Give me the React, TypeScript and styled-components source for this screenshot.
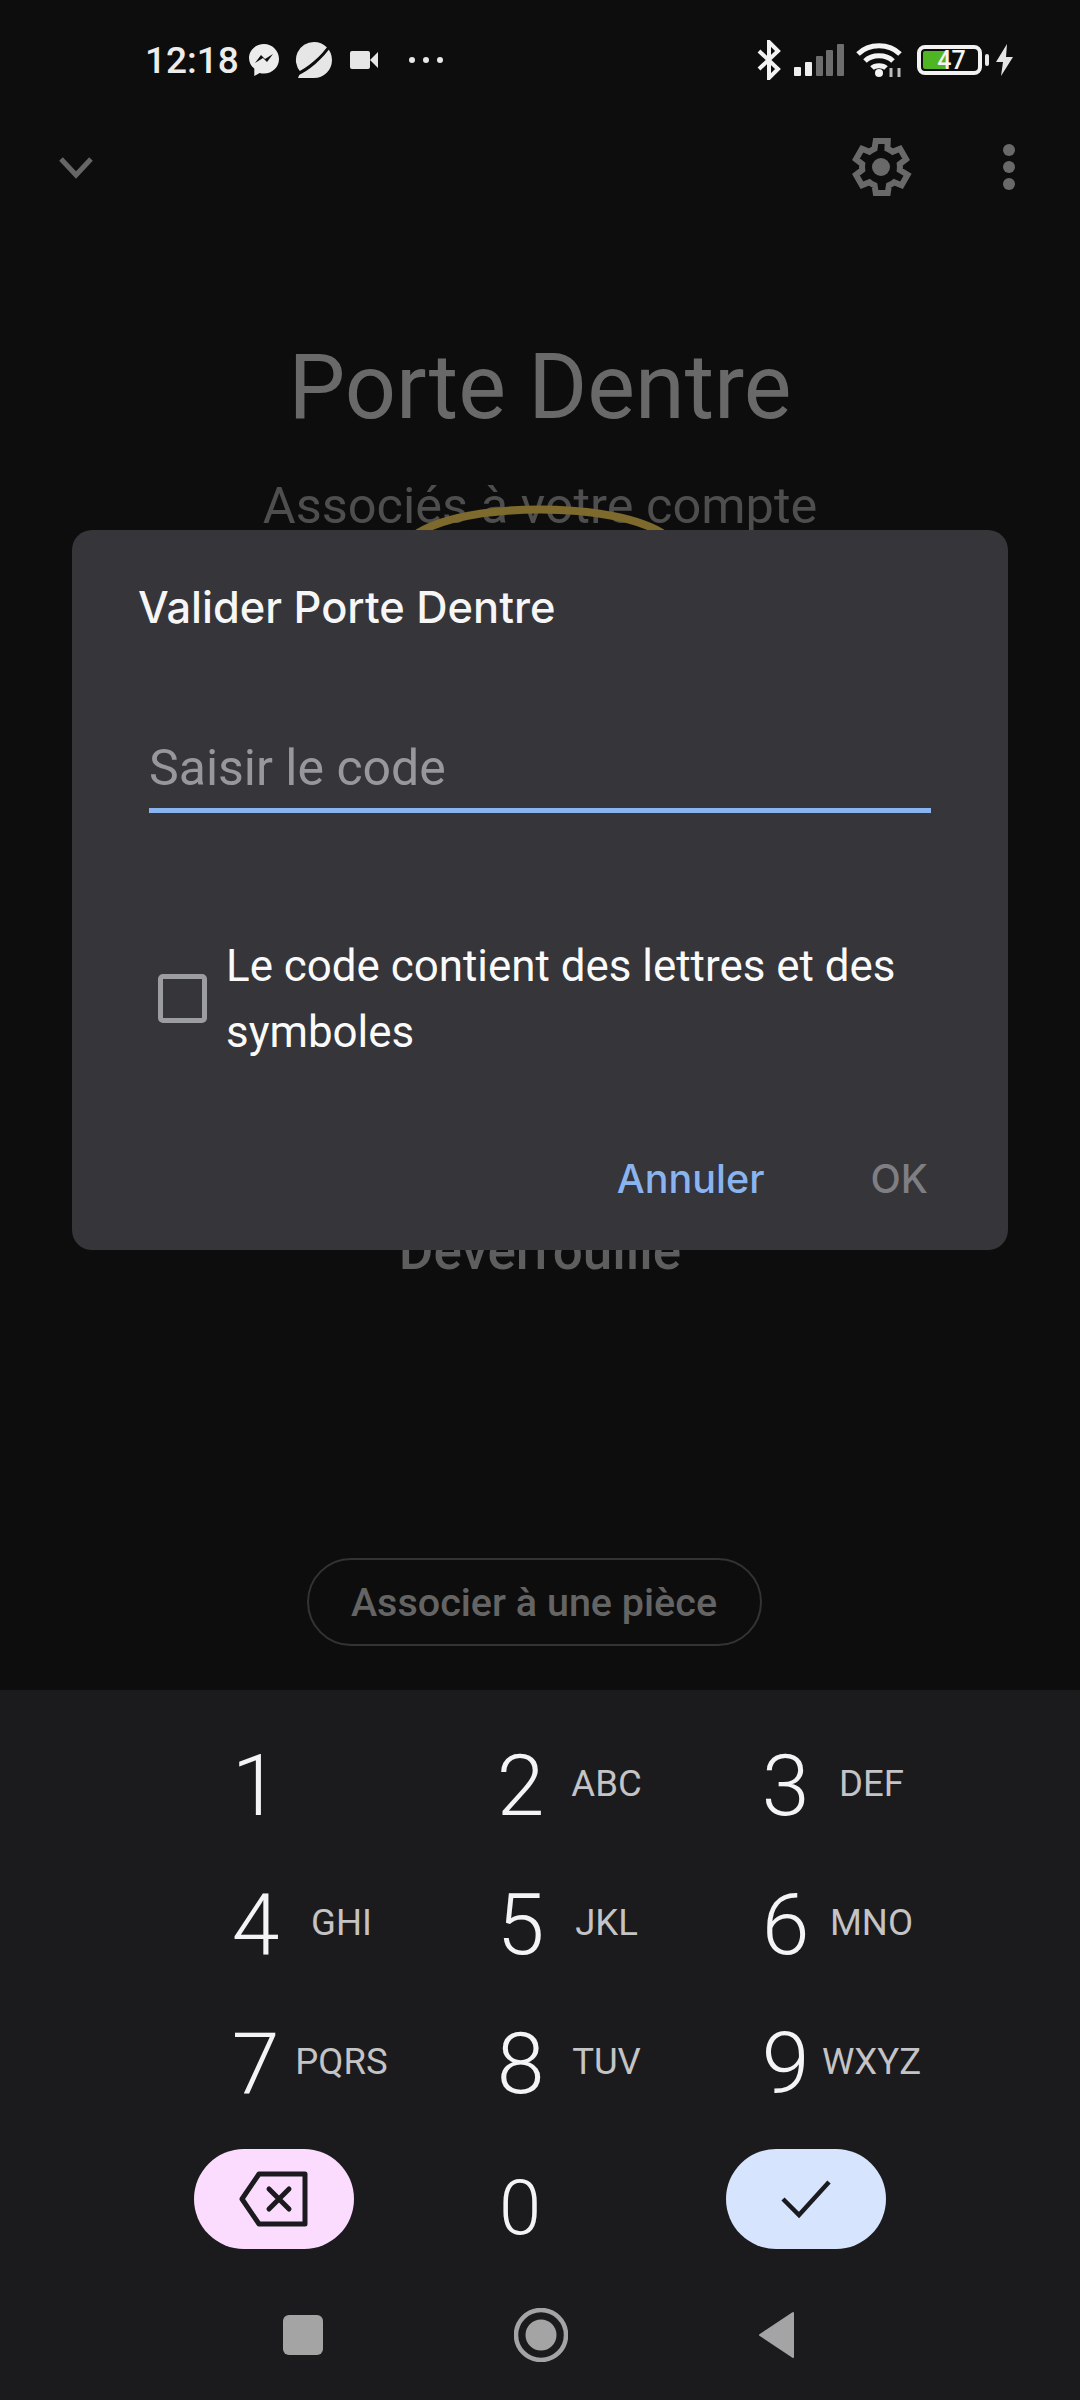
import React from 'react';
import styled, { createGlobalStyle } from 'styled-components';

const GlobalStyle = createGlobalStyle`
  html, body {
    margin: 0;
    padding: 0;
    background: #0d0d0d;
    font-family: Roboto, "Noto Sans", sans-serif;
  }
  * { box-sizing: border-box; }
`;

const Screen = styled.div`
  position: relative;
  width: 1080px;
  height: 2400px;
  overflow: hidden;
  display: flex;
  flex-direction: column;
  background: #0d0d0d;
`;

const StatusBar = styled.div`
  height: 120px;
  flex: none;
  display: flex;
  align-items: center;
  justify-content: space-between;
  padding: 0 66px 0 145px;
`;

const StatusGroup = styled.div`
  display: flex;
  align-items: center;
`;

const Clock = styled.span`
  font-size: 37px;
  font-weight: 500;
  color: #ececec;
  margin-right: 9px;
`;

const Icon = styled.svg<{ $left?: number }>`
  display: block;
  flex: none;
  margin-left: ${(p) => p.$left ?? 0}px;
`;

const Battery = styled.div`
  position: relative;
  width: 65px;
  height: 30px;
  margin-left: 14px;
  border: 4px solid #f2f2f2;
  border-radius: 8px;
  display: flex;
  align-items: center;
  justify-content: center;
  padding-left: 4px;
  font-size: 25px;
  font-weight: 500;
  line-height: 1;
  color: #f4f4f4;
  &::before {
    content: '';
    position: absolute;
    left: 2px;
    top: 2px;
    bottom: 2px;
    width: 24px;
    border-radius: 2px;
    background: #4fb522;
    z-index: 0;
  }
  &::after {
    content: '';
    position: absolute;
    right: -11px;
    top: 5px;
    width: 4px;
    height: 12px;
    border-radius: 2px;
    background: #e8e8e8;
  }
`;

const BatteryLevel = styled.span`
  position: relative;
  z-index: 1;
`;

const TopBar = styled.div`
  height: 94px;
  flex: none;
  display: flex;
  align-items: center;
  padding: 0 65px 0 58px;
`;

const TopSpacer = styled.div`
  flex: 1;
`;

const Main = styled.div`
  position: relative;
  flex: 1;
  display: flex;
  flex-direction: column;
  align-items: center;
`;

const DeviceName = styled.h1`
  margin: 124px 0 0;
  font-size: 90px;
  line-height: 100px;
  font-weight: 400;
  color: #696969;
`;

const DeviceSub = styled.div`
  margin-top: 38px;
  font-size: 50.5px;
  line-height: 60px;
  color: #4e4e4e;
`;

const LockArc = styled.svg`
  position: absolute;
  left: 405px;
  top: 291px;
`;

const LockState = styled.div`
  margin-top: 685px;
  font-size: 53px;
  line-height: 60px;
  font-weight: 500;
  color: #5e5e5e;
`;

const RoomButton = styled.div`
  margin-top: 277px;
  margin-left: -12px;
  width: 455px;
  height: 88px;
  border: 2px solid #333335;
  border-radius: 44px;
  display: flex;
  align-items: center;
  justify-content: center;
  font-size: 39.5px;
  font-weight: 500;
  color: #646464;
`;

const Dialog = styled.div`
  position: absolute;
  left: 72px;
  top: 316px;
  width: 936px;
  height: 720px;
  border-radius: 20px;
  background: #35353a;
  padding: 50px 77px 0 66px;
  display: flex;
  flex-direction: column;
`;

const DialogTitle = styled.h2`
  margin: 0;
  font-family: Inter, Roboto, sans-serif;
  font-size: 43.4px;
  line-height: 54px;
  font-weight: 500;
  color: #f6f6f6;
`;

const CodeField = styled.div`
  margin: 100px 0 0 11px;
  height: 79px;
  padding-top: 6px;
  border-bottom: 5px solid #8ab4f0;
  font-size: 50px;
  line-height: 56px;
  color: #98989c;
`;

const CheckRow = styled.div`
  margin: 120px 0 0 20px;
  display: flex;
  align-items: center;
`;

const CheckBox = styled.div`
  width: 49px;
  height: 49px;
  flex: none;
  border: 5px solid #9c9da1;
  border-radius: 5px;
  margin: -2px 19px 0 0;
`;

const CheckLabel = styled.div`
  font-size: 43.9px;
  line-height: 66px;
  color: #fafafa;
`;

const DialogActions = styled.div`
  margin: 89px 3px 0 0;
  display: flex;
  justify-content: flex-end;
  gap: 106px;
`;

const DialogAction = styled.span<{ $enabled?: boolean }>`
  font-family: Inter, Roboto, sans-serif;
  font-size: 39.5px;
  line-height: 50px;
  font-weight: 500;
  color: ${(p) => (p.$enabled ? '#8ab4f0' : '#7f7f83')};
`;

const Keyboard = styled.div`
  flex: none;
  height: 710px;
  background: #1b1b1d;
  display: flex;
  flex-direction: column;
  padding-top: 24px;
`;

const KeyRow = styled.div`
  height: 139px;
  flex: none;
  display: grid;
  grid-template-columns: repeat(3, 265px);
  padding-left: 210px;
`;

const Key = styled.div`
  display: grid;
  grid-template-columns: 91px 81px;
  align-items: center;
`;

const Digit = styled.span`
  text-align: center;
  font-size: 86px;
  font-weight: 300;
  line-height: 1;
  color: #f4f4f6;
  margin-top: 4px;
`;

const Letters = styled.span`
  justify-self: center;
  font-size: 36.5px;
  line-height: 1;
  color: #c4c4c6;
  white-space: nowrap;
  margin-top: 2px;
`;

const ActionRow = styled.div`
  height: 120px;
  flex: none;
  margin-top: 8px;
  display: grid;
  grid-template-columns: 160px 372px 160px;
  align-items: center;
  justify-items: center;
  padding-left: 194px;
`;

const ZeroKey = styled.span`
  font-size: 76px;
  font-weight: 300;
  line-height: 1;
  color: #f4f4f6;
  margin: 18px 40px 0 0;
`;

const PillKey = styled.div<{ $tone: string }>`
  width: 160px;
  height: 100px;
  border-radius: 50px;
  background: ${(p) => p.$tone};
  display: flex;
  align-items: center;
  justify-content: center;
`;

const NavBar = styled.div`
  flex: 1;
  display: flex;
  align-items: center;
  padding: 10px 285px 0 283px;
  justify-content: space-between;
`;

const NavSquare = styled.div`
  width: 40px;
  height: 40px;
  border-radius: 6px;
  background: #a4a4a4;
`;

const keyRows = [
  [
    ['1', ''],
    ['2', 'ABC'],
    ['3', 'DEF'],
  ],
  [
    ['4', 'GHI'],
    ['5', 'JKL'],
    ['6', 'MNO'],
  ],
  [
    ['7', 'PQRS'],
    ['8', 'TUV'],
    ['9', 'WXYZ'],
  ],
];

const App = (): JSX.Element => {
  return (
    <>
      <GlobalStyle />
      <Screen>
        <StatusBar>
          <StatusGroup>
            <Clock>12:18</Clock>
            <Icon width="32" height="34" viewBox="0 0 32 34">
              <path
                d="M16 1C7.7 1 1 7.2 1 15c0 4.3 2 8 5.3 10.500V33l5.400-3c1.400.4 2.800.6 4.300.6 8.300 0 15-6.500 15-14.600S24.300 1 16 1z"
                fill="#ececec"
              />
              <path d="M7 20l6-8 4 4 8-5-6 8-4-4z" fill="#0d0d0d" />
            </Icon>
            <Icon $left={15} width="38" height="38" viewBox="0 0 38 38">
              <path
                d="M19 1a18 18 0 0 1 18 18 18 18 0 0 1-18 18H3l2.500-6A18 18 0 0 1 19 1z"
                fill="#e6e6e6"
              />
              <path
                d="M2 33C12 29 27 17 36 3"
                fill="none"
                stroke="#0d0d0d"
                strokeWidth="3"
              />
            </Icon>
            <Icon $left={17} width="28" height="20" viewBox="0 0 28 20">
              <rect x="0" y="1" width="20" height="18" rx="2" fill="#e6e6e6" />
              <path d="M20 10l8-8v16z" fill="#e6e6e6" />
            </Icon>
            <Icon $left={31} width="34" height="8" viewBox="0 0 34 8">
              <circle cx="3" cy="4" r="3" fill="#e8e8e8" />
              <circle cx="17" cy="4" r="3" fill="#e8e8e8" />
              <circle cx="31" cy="4" r="3" fill="#e8e8e8" />
            </Icon>
          </StatusGroup>
          <StatusGroup>
            <Icon width="26" height="40" viewBox="0 0 26 40">
              <path
                d="M3 11l19 18-9 9V2l9 9L3 29"
                fill="none"
                stroke="#f2f2f2"
                strokeWidth="4"
              />
            </Icon>
            <Icon $left={12} width="50" height="34" viewBox="0 0 50 34">
              <rect x="0" y="24" width="7" height="9" rx="1" fill="#eeeeee" />
              <rect x="11" y="19" width="7" height="14" rx="1" fill="#eeeeee" />
              <rect x="22" y="13" width="7" height="20" rx="1" fill="#6d6d6d" />
              <rect x="32" y="7" width="7" height="26" rx="1" fill="#6d6d6d" />
              <rect x="43" y="1" width="7" height="32" rx="1" fill="#6d6d6d" />
            </Icon>
            <Icon $left={11} width="48" height="36" viewBox="0 0 48 36">
              <path
                d="M3 12c11-11 31-11 42 0M10 19c7-7 21-7 28 0M17 26c3-3 11-3 14 0"
                fill="none"
                stroke="#f4f4f4"
                strokeWidth="5"
              />
              <circle cx="24" cy="31" r="4" fill="#f4f4f4" />
              <path
                d="M36 26v9M44 26v9"
                fill="none"
                stroke="#bdbdbd"
                strokeWidth="3"
              />
            </Icon>
            <Battery>
              <BatteryLevel>47</BatteryLevel>
            </Battery>
            <Icon $left={13} width="19" height="32" viewBox="0 0 19 32">
              <path d="M12 0L1 18h7L6 32l12-19h-7z" fill="#e4e4e4" />
            </Icon>
          </StatusGroup>
        </StatusBar>
        <TopBar>
          <svg width="36" height="24" viewBox="0 0 36 24">
            <path
              d="M3 4l15 16L33 4"
              fill="none"
              stroke="#666666"
              strokeWidth="5"
            />
          </svg>
          <TopSpacer />
          <svg width="72" height="72" viewBox="0 0 24 24">
            <path
              d="M19.400 13a7.600 7.600 0 0 0 0-2l2.100-1.600-2-3.500-2.500 1a7.400 7.400 0 0 0-1.700-1L15.400 3.300h-4l-.4 2.600a7.400 7.400 0 0 0-1.700 1l-2.500-1-2 3.500L6.900 11a7.600 7.600 0 0 0 0 2l-2.100 1.600 2 3.500 2.500-1c.5.400 1.100.7 1.700 1l.4 2.600h4l.4-2.600c.6-.3 1.200-.6 1.700-1l2.500 1 2-3.500z"
              fill="none"
              stroke="#696969"
              strokeWidth="2"
              transform="translate(-1.150 0)"
            />
            <circle cx="12" cy="12" r="3" fill="#696969" />
          </svg>
          <Icon $left={86} width="12" height="46" viewBox="0 0 12 46">
            <circle cx="6" cy="6" r="6" fill="#696969" />
            <circle cx="6" cy="23" r="6" fill="#696969" />
            <circle cx="6" cy="40" r="6" fill="#696969" />
          </Icon>
        </TopBar>
        <Main>
          <DeviceName>Porte Dentre</DeviceName>
          <DeviceSub>Associés à votre compte</DeviceSub>
          <LockArc width="270" height="30" viewBox="0 0 270 30">
            <path
              d="M10 30C58 -4 212 -4 260 30"
              fill="none"
              stroke="#7d6a2c"
              strokeWidth="8"
            />
          </LockArc>
          <LockState>Déverrouillé</LockState>
          <RoomButton>Associer à une pièce</RoomButton>
          <Dialog>
            <DialogTitle>Valider Porte Dentre</DialogTitle>
            <CodeField>Saisir le code</CodeField>
            <CheckRow>
              <CheckBox />
              <CheckLabel>
                Le code contient des lettres et des
                <br />
                symboles
              </CheckLabel>
            </CheckRow>
            <DialogActions>
              <DialogAction $enabled>Annuler</DialogAction>
              <DialogAction>OK</DialogAction>
            </DialogActions>
          </Dialog>
        </Main>
        <Keyboard>
          {keyRows.map((row) => (
            <KeyRow key={row[0][0]}>
              {row.map(([digit, letters]) => (
                <Key key={digit}>
                  <Digit>{digit}</Digit>
                  <Letters>{letters}</Letters>
                </Key>
              ))}
            </KeyRow>
          ))}
          <ActionRow>
            <PillKey $tone="#fbdcff">
              <svg width="70" height="56" viewBox="0 0 70 56">
                <path
                  d="M20 3h46v50H20L3 28z"
                  fill="none"
                  stroke="#1b1b1f"
                  strokeWidth="5"
                  strokeLinejoin="round"
                />
                <path
                  d="M30 18l20 20M50 18L30 38"
                  fill="none"
                  stroke="#1b1b1f"
                  strokeWidth="5"
                  strokeLinecap="round"
                />
              </svg>
            </PillKey>
            <ZeroKey>0</ZeroKey>
            <PillKey $tone="#d6e4fd">
              <svg width="52" height="40" viewBox="0 0 52 40">
                <path
                  d="M3 20l16 16L49 3"
                  fill="none"
                  stroke="#1b1b1f"
                  strokeWidth="4.500"
                />
              </svg>
            </PillKey>
          </ActionRow>
          <NavBar>
            <NavSquare />
            <svg width="54" height="54" viewBox="0 0 54 54">
              <circle cx="27" cy="27" r="25" fill="none" stroke="#a4a4a4" strokeWidth="4.500" />
              <circle cx="27" cy="27" r="15.500" fill="#a4a4a4" />
            </svg>
            <svg width="37" height="48" viewBox="0 0 37 48">
              <path
                d="M35 2v44L2 24z"
                fill="#a4a4a4"
                stroke="#a4a4a4"
                strokeWidth="2"
                strokeLinejoin="round"
              />
            </svg>
          </NavBar>
        </Keyboard>
      </Screen>
    </>
  );
};

export default App;
